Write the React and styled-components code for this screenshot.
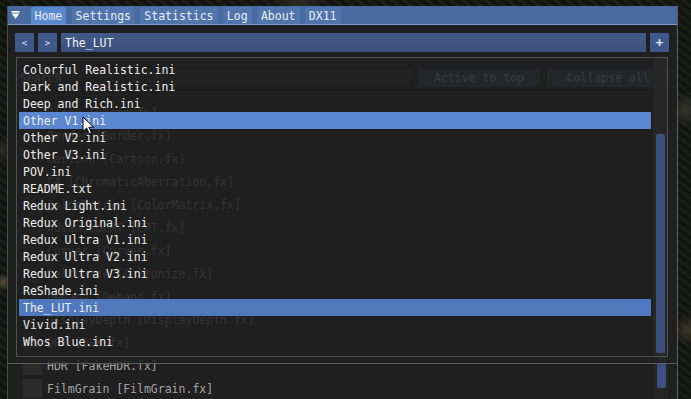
import React from 'react';
import styled, { createGlobalStyle } from 'styled-components';

const FONT = `"DejaVu Sans Mono", "Liberation Mono", monospace`;

const TABS = ['Home', 'Settings', 'Statistics', 'Log', 'About', 'DX11'];

const PRESETS = [
  'Colorful Realistic.ini',
  'Dark and Realistic.ini',
  'Deep and Rich.ini',
  'Other V1.ini',
  'Other V2.ini',
  'Other V3.ini',
  'POV.ini',
  'README.txt',
  'Redux Light.ini',
  'Redux Original.ini',
  'Redux Ultra V1.ini',
  'Redux Ultra V2.ini',
  'Redux Ultra V3.ini',
  'ReShade.ini',
  'The_LUT.ini',
  'Vivid.ini',
  'Whos Blue.ini',
];

const EFFECTS = [
  'Bloom [Bloom.fx]',
  'Border [Border.fx]',
  'Cartoon [Cartoon.fx]',
  'CA [ChromaticAberration.fx]',
  'ColorMatrix [ColorMatrix.fx]',
  'AdvancedCRT [CRT.fx]',
  'Curves [Curves.fx]',
  'Daltonize [Daltonize.fx]',
  'Deband [Deband.fx]',
  'DisplayDepth [DisplayDepth.fx]',
  'DPX [DPX.fx]',
  'HDR [FakeHDR.fx]',
  'FilmGrain [FilmGrain.fx]',
];

const GlobalStyle = createGlobalStyle`
  html, body {
    margin: 0;
    padding: 0;
    height: 399px;
    overflow: hidden;
  }
  body {
    background:
      radial-gradient(circle at 3px 282px, #5c4c34 0, transparent 9px),
      radial-gradient(circle at 2px 150px, #2c2e24 0, transparent 14px),
      radial-gradient(circle at 686px 110px, #34352a 0, transparent 18px),
      radial-gradient(circle at 688px 330px, #3a3628 0, transparent 16px),
      radial-gradient(circle at 300px 2px, #2a2b22 0, transparent 30px),
      repeating-linear-gradient(37deg, #1b1d17 0 3px, #121410 3px 7px);
    font-family: ${FONT};
    font-size: 11.5px;
    color: #e6e6e6;
  }
`;

const Stage = styled.div`
  position: relative;
  width: 691px;
  height: 399px;
  padding: 6px 0 0 7px;
  box-sizing: border-box;
`;

const Window = styled.div`
  width: 671px;
  height: 393px;
  background: #1f1f1f;
  border-left: 1px solid #4a4a4a;
  border-right: 1px solid #5c5c5c;
  box-sizing: border-box;
  display: flex;
  flex-direction: column;
  overflow: hidden;
`;

const TabBar = styled.div`
  height: 19px;
  background: #486a9f;
  border-bottom: 1px solid #7c9ed4;
  box-sizing: border-box;
  display: flex;
  align-items: flex-end;
  gap: 5.3px;
  padding-left: 3px;
`;

const CollapseIcon = styled.svg`
  display: block;
  margin-bottom: 5px;
`;

const Tab = styled.div`
  height: 17px;
  line-height: 18px;
  padding: 0 4px;
  border-radius: 3px 3px 0 0;
  background: ${p => (p.$active ? '#5b89cf' : '#5075ad')};
  color: #ececec;
  white-space: nowrap;
`;

const Body = styled.div`
  flex: 1;
  padding: 8px 8px 0 7px;
  display: flex;
  flex-direction: column;
  min-height: 0;
`;

const Toolbar = styled.div`
  display: flex;
  gap: 4px;
  height: 19px;
`;

const NavButton = styled.div`
  width: 19px;
  height: 19px;
  background: #3d5889;
  color: #dde3ee;
  font-size: ${p => (p.$plus ? '13px' : '9px')};
  font-weight: ${p => (p.$plus ? 'bold' : 'normal')};
  display: flex;
  align-items: center;
  justify-content: center;
`;

const PathInput = styled.div`
  flex: 1;
  height: 19px;
  line-height: 20px;
  padding-left: 4px;
  background: linear-gradient(#43598a, #3b5079);
  color: #eef1f6;
`;

const EffectsPanel = styled.div`
  margin-top: 5px;
  flex: 1;
  display: flex;
  min-height: 0;
  overflow: hidden;
`;

const EffectsColumn = styled.div`
  flex: 1;
  display: flex;
  flex-direction: column;
  padding-top: 12px;
`;

const SearchRow = styled.div`
  display: flex;
  gap: 7px;
  height: 18px;
  margin-right: -15px;
`;

const SearchBox = styled.div`
  flex: 1;
  background: #2b2b2b;
  color: #bdbdbd;
  line-height: 18px;
  padding-left: 5px;
`;

const PanelButton = styled.div`
  width: 122px;
  background: #3a4a66;
  color: #d8d8d8;
  text-align: center;
  line-height: 18px;
`;

const Separator = styled.div`
  height: 1px;
  background: #3a3a3a;
  margin: 8px 0 7px;
`;

const EffectList = styled.div`
  display: flex;
  flex-direction: column;
  gap: 4px;
  padding-left: 8px;
`;

const EffectRow = styled.div`
  display: flex;
  align-items: center;
  gap: 5px;
  height: 19px;
  color: #a2a2a2;
  white-space: nowrap;
`;

const CheckBox = styled.div`
  width: 19px;
  height: 19px;
  background: #2c2c2c;
`;

const ScrollTrack = styled.div`
  width: 14px;
  margin-right: 1px;
  background: #252525;
  display: flex;
  flex-direction: column;
`;

const ScrollThumb = styled.div`
  width: 9px;
  margin-left: 3px;
  background: #3c5080;
  border-radius: 2px;
`;

/* preset browser popup, drawn over the effect list */
const Popup = styled.div`
  position: absolute;
  left: 7px;
  top: 53px;
  width: 671px;
  height: 311px;
  box-sizing: border-box;
  background: rgba(31, 31, 31, 0.86);
  border-left: 1px solid #4c4c4c;
  border-right: 1px solid #5c5c5c;
  border-bottom: 1px solid #5a5a5a;
  padding: 4px 0 0 8px;
`;

const ListBox = styled.div`
  width: 652px;
  height: 300px;
  box-sizing: border-box;
  border: 1px solid #505050;
  display: flex;
`;

const Items = styled.div`
  flex: 1;
  padding: 3px 2px 0 2px;
`;

const Item = styled.div`
  height: 17px;
  line-height: 19px;
  padding-left: 4px;
  white-space: nowrap;
  color: #ececec;
  background: ${p => (p.$hover ? '#5b87d0' : p.$selected ? '#4f78bd' : 'transparent')};
`;

const ListScroll = styled.div`
  width: 14px;
  background: #262626;
`;

const Cursor = styled.svg`
  position: absolute;
  left: 82px;
  top: 116px;
`;

export default function App() {
  return (
    <>
      <GlobalStyle />
      <Stage>
        <Window>
          <TabBar>
            <CollapseIcon width="9" height="8" viewBox="0 0 9 8">
              <rect x="0.5" y="0" width="8" height="1.6" fill="#fff" />
              <path d="M0.5 2.6 H8.5 L4.5 7.8 Z" fill="#fff" />
            </CollapseIcon>
            <span style={{ width: 0 }} />
            {TABS.map((t, i) => (
              <Tab key={t} $active={i === 0}>{t}</Tab>
            ))}
          </TabBar>
          <Body>
            <Toolbar>
              <NavButton>&lt;</NavButton>
              <NavButton>&gt;</NavButton>
              <PathInput>The_LUT</PathInput>
              <NavButton $plus>+</NavButton>
            </Toolbar>
            <EffectsPanel>
              <EffectsColumn>
                <SearchRow>
                  <SearchBox>Search</SearchBox>
                  <PanelButton>Active to top</PanelButton>
                  <PanelButton>Collapse all</PanelButton>
                </SearchRow>
                <Separator />
                <EffectList>
                  {EFFECTS.map(e => (
                    <EffectRow key={e}>
                      <CheckBox />
                      {e}
                    </EffectRow>
                  ))}
                </EffectList>
              </EffectsColumn>
              <ScrollTrack>
                <ScrollThumb style={{ marginTop: 220, height: 111 }} />
              </ScrollTrack>
            </EffectsPanel>
          </Body>
        </Window>

        <Popup>
          <ListBox>
            <Items>
              {PRESETS.map(p => (
                <Item key={p} $hover={p === 'Other V1.ini'} $selected={p === 'The_LUT.ini'}>
                  {p}
                </Item>
              ))}
            </Items>
            <ListScroll>
              <ScrollThumb style={{ marginTop: 76, height: 219 }} />
            </ListScroll>
          </ListBox>
        </Popup>

        <Cursor width="13" height="19" viewBox="0 0 13 19">
          <path
            d="M1 1 L1 15.5 L4.6 12 L7.2 17.8 L9.4 16.8 L6.9 11.2 L11.6 11.2 Z"
            fill="#fff"
            stroke="#000"
            strokeWidth="1"
            strokeLinejoin="round"
          />
        </Cursor>
      </Stage>
    </>
  );
}
